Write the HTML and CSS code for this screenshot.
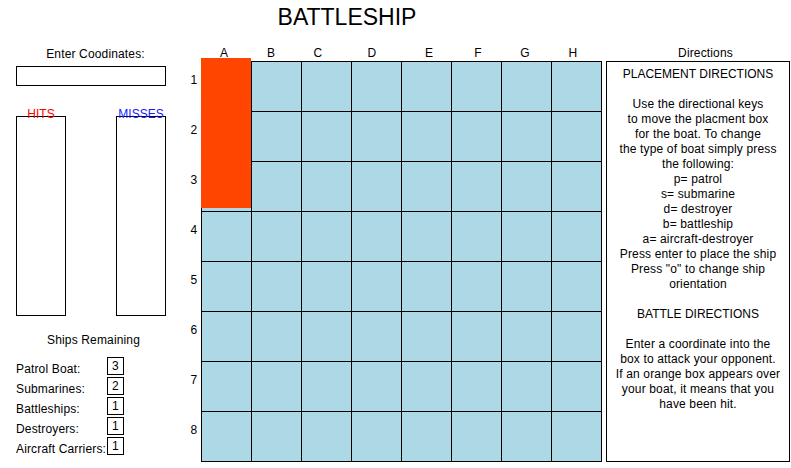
FILE: index.html
```html
<!DOCTYPE html>
<html lang="en">
<head>
<meta charset="utf-8">
<title>Battleship</title>
<link rel="stylesheet" href="styles.css">
</head>
<body>
<header class="title-bar"><h1 class="title">BATTLESHIP</h1></header>
<main class="layout">
  <aside class="controls">
    <div class="coord-label">Enter Coodinates:</div>
    <input class="coord-input" type="text" aria-label="Coordinates">
    <div class="tally">
      <div class="tally-col">
        <div class="tally-label hits">HITS</div>
        <div class="tally-box"></div>
      </div>
      <div class="tally-col">
        <div class="tally-label misses">MISSES</div>
        <div class="tally-box"></div>
      </div>
    </div>
    <div class="ships-title">Ships Remaining</div>
    <ul class="ships">
      <li class="ship-row"><span class="ship-name">Patrol Boat:</span><span class="ship-count">3</span></li>
      <li class="ship-row"><span class="ship-name">Submarines:</span><span class="ship-count">2</span></li>
      <li class="ship-row"><span class="ship-name">Battleships:</span><span class="ship-count">1</span></li>
      <li class="ship-row"><span class="ship-name">Destroyers:</span><span class="ship-count">1</span></li>
      <li class="ship-row"><span class="ship-name">Aircraft Carriers:</span><span class="ship-count">1</span></li>
    </ul>
  </aside>

  <section class="board">
    <div class="row-labels">
      <div class="row-label">1</div>
      <div class="row-label">2</div>
      <div class="row-label">3</div>
      <div class="row-label">4</div>
      <div class="row-label">5</div>
      <div class="row-label">6</div>
      <div class="row-label">7</div>
      <div class="row-label">8</div>
    </div>
    <div class="board-main">
      <div class="col-labels">
        <span class="col-label">A</span>
        <span class="col-label">B</span>
        <span class="col-label">C</span>
        <span class="col-label">D</span>
        <span class="col-label">E</span>
        <span class="col-label">F</span>
        <span class="col-label">G</span>
        <span class="col-label">H</span>
      </div>
      <div class="grid-wrap">
        <div class="grid">
          <div class="cell"></div><div class="cell"></div><div class="cell"></div><div class="cell"></div><div class="cell"></div><div class="cell"></div><div class="cell"></div><div class="cell"></div>
          <div class="cell"></div><div class="cell"></div><div class="cell"></div><div class="cell"></div><div class="cell"></div><div class="cell"></div><div class="cell"></div><div class="cell"></div>
          <div class="cell"></div><div class="cell"></div><div class="cell"></div><div class="cell"></div><div class="cell"></div><div class="cell"></div><div class="cell"></div><div class="cell"></div>
          <div class="cell"></div><div class="cell"></div><div class="cell"></div><div class="cell"></div><div class="cell"></div><div class="cell"></div><div class="cell"></div><div class="cell"></div>
          <div class="cell"></div><div class="cell"></div><div class="cell"></div><div class="cell"></div><div class="cell"></div><div class="cell"></div><div class="cell"></div><div class="cell"></div>
          <div class="cell"></div><div class="cell"></div><div class="cell"></div><div class="cell"></div><div class="cell"></div><div class="cell"></div><div class="cell"></div><div class="cell"></div>
          <div class="cell"></div><div class="cell"></div><div class="cell"></div><div class="cell"></div><div class="cell"></div><div class="cell"></div><div class="cell"></div><div class="cell"></div>
          <div class="cell"></div><div class="cell"></div><div class="cell"></div><div class="cell"></div><div class="cell"></div><div class="cell"></div><div class="cell"></div><div class="cell"></div>
        </div>
        <div class="placement"></div>
      </div>
    </div>
  </section>

  <aside class="directions">
    <div class="directions-label">Directions</div>
    <div class="directions-box">
      <p class="dir-block dir-head">PLACEMENT DIRECTIONS</p>
      <p class="dir-block">Use the directional keys<br>to move the placment box<br>for the boat. To change<br>the type of boat simply press<br>the following:<br>p= patrol<br>s= submarine<br>d= destroyer<br>b= battleship<br>a= aircraft-destroyer<br>Press enter to place the ship<br>Press "o" to change ship<br>orientation</p>
      <p class="dir-block dir-head">BATTLE DIRECTIONS</p>
      <p class="dir-block">Enter a coordinate into the<br>box to attack your opponent.<br>If an orange box appears over<br>your boat, it means that you<br>have been hit.</p>
    </div>
  </aside>
</main>
</body>
</html>
```

FILE: styles.css
```css
* { box-sizing: border-box; }

html, body {
  margin: 0;
  padding: 0;
  background: #fff;
}

body {
  font-family: "Liberation Sans", Arial, sans-serif;
  font-size: 12px;
  letter-spacing: 0.15px;
  color: #000;
  width: 791px;
  height: 468px;
  overflow: hidden;
}

.title-bar {
  height: 44px;
  width: 694px;
  padding-top: 4px;
}

.title {
  margin: 0;
  font-size: 23px;
  font-weight: normal;
  line-height: 27px;
  letter-spacing: 0;
  text-align: center;
}

.layout {
  display: flex;
  align-items: flex-start;
}

/* left controls */
.controls {
  width: 187px;
  flex: none;
}

.coord-label {
  padding-top: 2px;
  line-height: 17px;
  text-align: center;
  padding-left: 4px;
}

.coord-input {
  display: block;
  margin: 3px 0 0 16px;
  width: 150px;
  height: 20px;
  border: 1px solid #000;
  padding: 0;
  font: inherit;
  background: #fff;
}

.tally {
  display: flex;
  gap: 50px;
  margin: 21px 0 0 16px;
}

.tally-col {
  width: 50px;
}

.tally-label {
  line-height: 14px;
  text-align: center;
  margin-bottom: -5px;
  position: relative;
  white-space: nowrap;
  letter-spacing: 0;
}

.hits { color: #ff0000; }
.misses { color: #1a1aff; }

.tally-box {
  width: 50px;
  height: 200px;
  border: 1px solid #000;
}

.ships-title {
  margin-top: 16px;
  line-height: 16px;
  text-align: center;
}

.ships {
  list-style: none;
  margin: 8px 0 0;
  padding: 0 0 0 16px;
}

.ship-row {
  display: flex;
  align-items: flex-start;
  height: 20px;
}

.ship-name {
  width: 91px;
  line-height: 20px;
  padding-top: 3px;
  white-space: nowrap;
}

.ship-count {
  margin-top: 1px;
  width: 17px;
  height: 18px;
  border: 1px solid #000;
  text-align: center;
  line-height: 16px;
}

/* board */
.board {
  display: flex;
  flex: none;
}

.row-labels {
  width: 14px;
  padding-top: 17px;
}

.row-label {
  height: 50px;
  padding-top: 12px;
  line-height: 14px;
  text-align: center;
}

.board-main {
  width: 401px;
}

.col-labels {
  display: flex;
  height: 17px;
  padding-top: 2px;
  line-height: 15px;
}

.col-label { text-align: center; }
.col-label:nth-child(1) { width: 46px; }
.col-label:nth-child(2) { width: 48px; }
.col-label:nth-child(3) { width: 46px; }
.col-label:nth-child(4) { width: 62px; }
.col-label:nth-child(5) { width: 52px; }
.col-label:nth-child(6) { width: 46px; }
.col-label:nth-child(7) { width: 48px; }
.col-label:nth-child(8) { width: 48px; }

.grid-wrap {
  position: relative;
}

.grid {
  display: grid;
  grid-template-columns: repeat(8, 49px);
  grid-auto-rows: 49px;
  gap: 1px;
  background: #000;
  border: 1px solid #000;
  width: 401px;
  height: 401px;
}

.cell {
  background: #add8e6;
}

.placement {
  position: absolute;
  left: 0;
  top: -3px;
  width: 50px;
  height: 150px;
  background: #ff4500;
}

/* directions */
.directions {
  width: 184px;
  margin-left: 4px;
  flex: none;
}

.directions-label {
  height: 17px;
  padding-top: 2px;
  line-height: 15px;
  text-align: center;
  padding-left: 15px;
}

.directions-box {
  height: 401px;
  border: 1px solid #000;
  padding-top: 5px;
  text-align: center;
  line-height: 15px;
  white-space: nowrap;
}

.dir-block {
  margin: 0 0 15px;
}

.dir-head {
  letter-spacing: 0;
}
```
